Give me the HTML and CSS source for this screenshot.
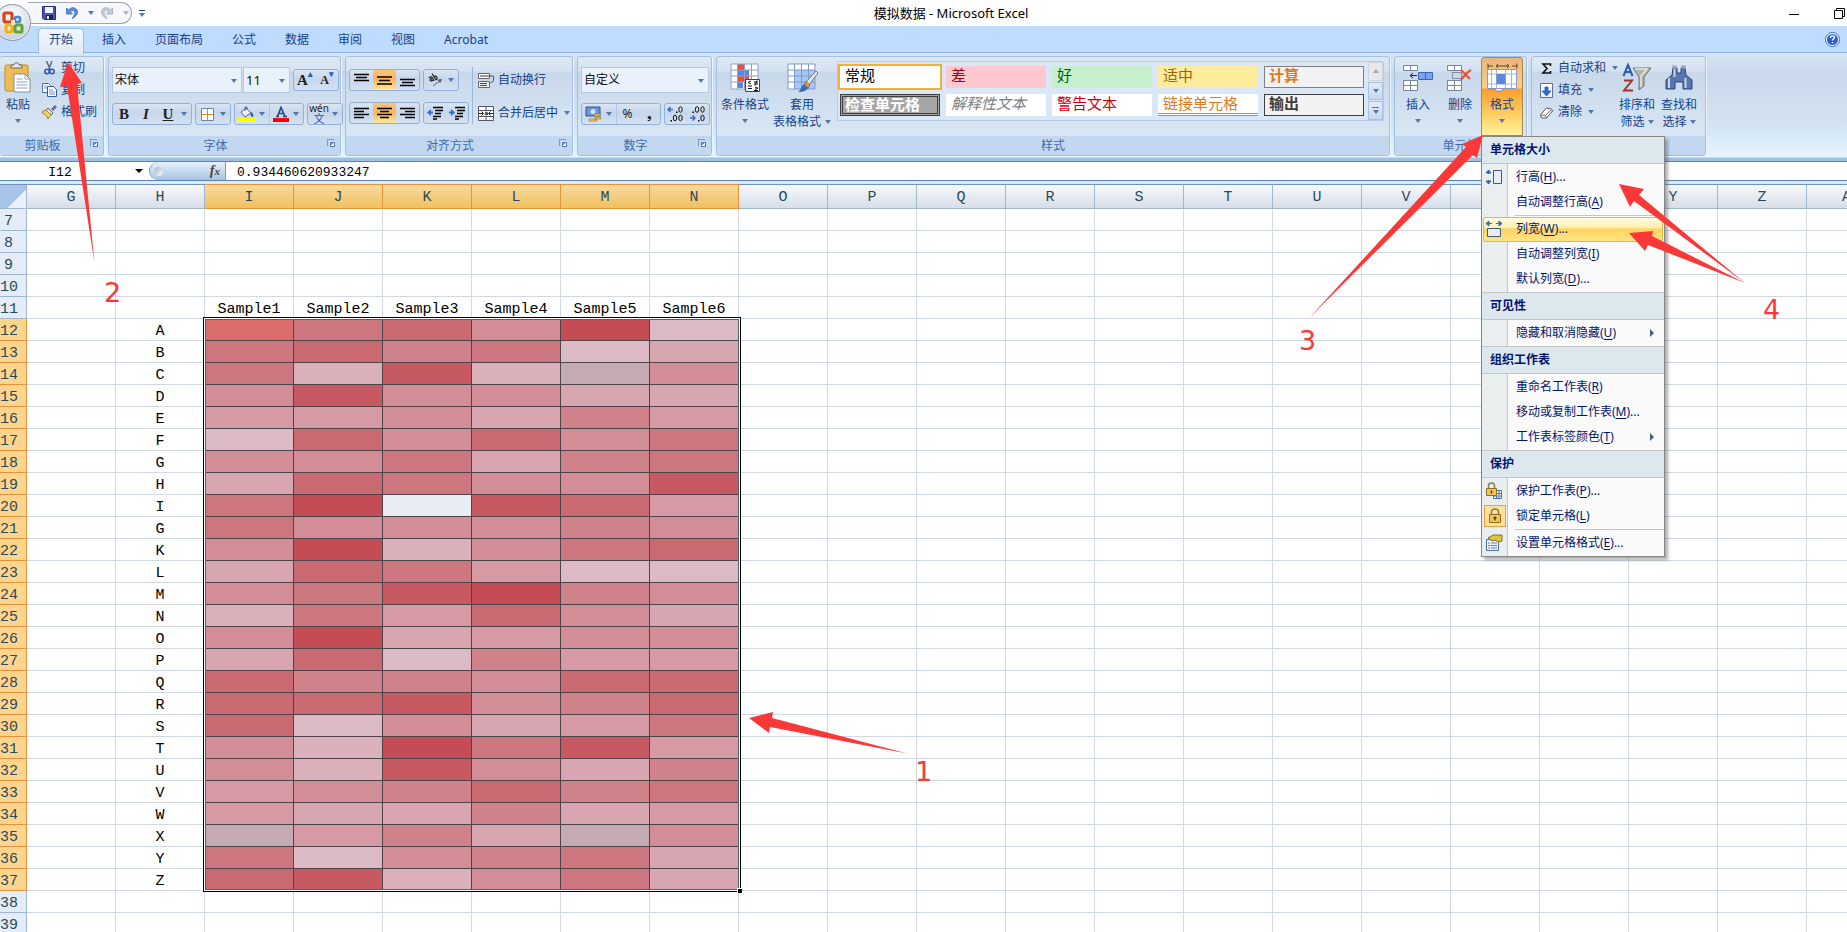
FILE: index.html
```html
<!DOCTYPE html>
<html lang="zh-CN">
<head>
<meta charset="utf-8">
<title>模拟数据 - Microsoft Excel</title>
<link rel="stylesheet" href="styles.css">
</head>
<body>
<header class="top">
  <div class="titlebar">
    <div class="qat-zone">
      <div class="qat">
        <button class="bare" aria-label="保存"><svg width="14" height="14" viewBox="0 0 14 14"><path d="M.5.5h13v13H2l-1.500-1.500z" fill="#4a50b4" stroke="#2b2f7e"/><path d="M3 1h8v6H3z" fill="#eef4ff"/><path d="M4 9h7v4.500H4z" fill="#1d2050"/><path d="M5 10h2v3H5z" fill="#dfe6ff"/></svg></button>
        <button class="bare" aria-label="撤消"><svg width="14" height="14" viewBox="0 0 14 14"><path d="M1.500 2v6h6L5.500 6C8 3 11 5 9.500 8.500 9 10 8 11 7 12.500 11.500 10.500 13.500 7 12 4 10.300 1 6 .8 3.500 4z" fill="#5b8fdc" stroke="#2c5cae" stroke-width=".7"/></svg></button>
        <i class="caret"></i>
        <button class="bare" aria-label="恢复"><svg width="14" height="14" viewBox="0 0 14 14"><path d="M12.500 2v6h-6L8.500 6C6 3 3 5 4.500 8.500 5 10 6 11 7 12.500 2.500 10.500.5 7 2 4 3.700 1 8 .8 10.500 4z" fill="#c3ccd8" stroke="#98a5b8" stroke-width=".7"/></svg></button>
        <i class="caret dim"></i>
      </div>
      <button class="bare more" aria-label="自定义快速访问工具栏"><i class="caret"></i></button>
    </div>
    <div class="title">模拟数据 - Microsoft Excel</div>
    <div class="winbtns">
      <button class="bare" aria-label="最小化"><svg width="10" height="11" viewBox="0 0 10 11"><path d="M0 6.500h10" stroke="#000"/></svg></button>
      <button class="bare" aria-label="还原"><svg width="11" height="11" viewBox="0 0 11 11"><path d="M.5 2.500h8v8h-8zM2.500 2.500v-2h8v8h-2" fill="none" stroke="#000"/></svg></button>
    </div>
  </div>
  <nav class="tabs">
    <button class="tab active">开始</button><button class="tab">插入</button><button class="tab">页面布局</button><button class="tab">公式</button><button class="tab">数据</button><button class="tab">审阅</button><button class="tab">视图</button><button class="tab">Acrobat</button>
    <button class="bare help" aria-label="帮助"><svg width="15" height="15" viewBox="0 0 15 15"><circle cx="7.500" cy="7.500" r="7" fill="#fff" stroke="#3a68c8"/><circle cx="7.500" cy="7.500" r="5.500" fill="#2b5fd0"/><path d="M5.500 6c0-3 4-2.500 4-.5 0 1.500-2 1.300-2 3M7.500 10v1.300" fill="none" stroke="#fff" stroke-width="1.400"/></svg></button>
  </nav>
  <button class="orb" aria-label="Office 按钮"><svg width="22" height="24" viewBox="0 0 22 24"><g fill="none" stroke-width="3.200"><rect x="2" y="2" width="8" height="9" rx="1.500" stroke="#d8451c"/><rect x="13" y="6" width="5" height="5" rx="1.500" stroke="#3c8bd6" stroke-width="2.600"/><rect x="4" y="14" width="6" height="7" rx="1.500" stroke="#f2b11c"/><rect x="13" y="14" width="7" height="7" rx="1.500" stroke="#5fa53a"/></g><path d="M9 9h4v5H9z" fill="#f5e3c4"/></svg></button>
</header>

<section class="ribbon">
  <div class="group g-clip">
    <div class="gbody">
      <button class="big"><svg width="28" height="32" viewBox="0 0 28 32"><rect x="1" y="3" width="23" height="26" rx="1.500" fill="#eebb55" stroke="#c08a2c"/><path d="M7 6V3h3c0-3 5-3 5 0h3v3z" fill="#e6e9ee" stroke="#666"/><path d="M10 12h11l5 5v13H10z" fill="#fff" stroke="#7b8fae"/><path d="M21 12v5h5M12.500 17h6M12.500 20h11M12.500 23h11M12.500 26h11" fill="none" stroke="#8aa0c4"/></svg><span>粘贴</span><i class="caret"></i></button>
      <div class="stack">
        <button class="small"><svg width="14" height="14" viewBox="0 0 14 14"><path d="M4 0l4 9M9.500 0L6 9" stroke="#566a8c" stroke-width="1.500"/><circle cx="4.500" cy="10.500" r="2.200" fill="none" stroke="#2c5cae" stroke-width="1.600"/><circle cx="9.500" cy="10.500" r="2.200" fill="none" stroke="#2c5cae" stroke-width="1.600"/></svg>剪切</button>
        <button class="small"><svg width="15" height="14" viewBox="0 0 15 14"><path d="M.5.500h6l2 2v7h-8z" fill="#fff" stroke="#4a70b0"/><path d="M5.500 3.500h6l3 3v7h-9z" fill="#fff" stroke="#2c5cae"/><path d="M2 3h3M2 5h3M7 7h4M7 9h6M7 11h6" stroke="#6d92cc"/></svg>复制</button>
        <button class="small"><svg width="15" height="14" viewBox="0 0 15 14"><path d="M9 4l4-4 2 2-4 4z" fill="#7c5fa8"/><path d="M6 3l5 5-2 2-6-4z" fill="#d8dce4" stroke="#667"/><path d="M1 6l3-1 5 5-3 4C5 11 3 9 0 8z" fill="#f4d35c" stroke="#8c7326" stroke-width=".8"/></svg>格式刷</button>
      </div>
    </div>
    <div class="glabel"><span>剪贴板</span><i class="launch"></i></div>
  </div>

  <div class="group g-font">
    <div class="gbody rows">
      <div class="line">
        <span class="joined"><label class="sel w-name"><select aria-label="字体"><option>宋体</option></select></label><label class="sel w-size"><select aria-label="字号"><option>11</option></select></label></span>
        <div class="box"><button class="serif grow">A<sup>▴</sup></button><button class="serif shrink">A<sup>▾</sup></button></div>
      </div>
      <div class="line">
        <div class="box"><button class="serif b">B</button><button class="serif i">I</button><button class="serif u">U</button><i class="caret"></i></div>
        <div class="box"><button aria-label="边框"><svg width="13" height="13" viewBox="0 0 13 13"><path d="M.5.5h12v12H.5z" fill="#fff" stroke="#6d83ab"/><path d="M6.500 1v11M1 6.500h11" stroke="#d48c2a"/></svg></button><i class="caret"></i></div>
        <div class="box"><button aria-label="填充颜色"><svg width="17" height="16" viewBox="0 0 17 16"><path d="M3 6l5-4 5 5-6 4z" fill="#eef2f8" stroke="#55688a"/><path d="M7 5V1h2v3" fill="none" stroke="#55688a"/><path d="M13 6c2 1 3 3 2 5-2 0-3-2-2-5" fill="#2c5cae"/><path d="M0 12h17v4H0z" fill="#ff0"/></svg></button><i class="caret"></i><button aria-label="字体颜色"><svg width="16" height="16" viewBox="0 0 16 16"><path d="M3 10.500h3M10 10.500h4M4.500 10.500L8 1.500l4 9M6 7.500h5" fill="none" stroke="#2b4a86" stroke-width="1.700"/><path d="M0 12h16v4H0z" fill="#f00"/></svg></button><i class="caret"></i></div>
        <div class="box"><button class="wen"><span>wén</span><span>文</span></button><i class="caret"></i></div>
      </div>
    </div>
    <div class="glabel"><span>字体</span><i class="launch"></i></div>
  </div>

  <div class="group g-align">
    <div class="gbody">
      <div class="rows">
        <div class="line">
          <div class="box wide"><button aria-label="顶端对齐"><svg width="15" height="14"><path d="M0 1.500h15M2 4.500h11M0 7.500h15" stroke="#000" stroke-width="1.500"/></svg></button><button class="on" aria-label="垂直居中"><svg width="15" height="14"><path d="M0 4h15M2 7.500h11M0 11h15" stroke="#000" stroke-width="1.500"/></svg></button><button aria-label="底端对齐"><svg width="15" height="14"><path d="M0 6.500h15M2 9.500h11M0 12.500h15" stroke="#000" stroke-width="1.500"/></svg></button></div>
          <div class="box"><button aria-label="方向"><svg width="16" height="14" viewBox="0 0 16 14"><path d="M2 5c1-2 3-1 3.500 0L7 8M5 5.500C2 6 3 9 6 7.500M5 .5L9 7M7 4c1-2 5 0 2 3" fill="none" stroke="#222" stroke-width="1.300"/><path d="M6 13l8-6M14.500 6.500l-3.500.5 2 2.500z" fill="#567" stroke="#567"/></svg></button><i class="caret"></i></div>
        </div>
        <div class="line">
          <div class="box wide"><button aria-label="左对齐"><svg width="15" height="13"><path d="M0 1.500h15M0 4.500h10M0 7.500h15M0 10.500h10" stroke="#000" stroke-width="1.500"/></svg></button><button class="on" aria-label="居中"><svg width="15" height="13"><path d="M0 1.500h15M3 4.500h9M0 7.500h15M3 10.500h9" stroke="#000" stroke-width="1.500"/></svg></button><button aria-label="右对齐"><svg width="15" height="13"><path d="M0 1.500h15M5 4.500h10M0 7.500h15M5 10.500h10" stroke="#000" stroke-width="1.500"/></svg></button></div>
          <div class="box"><button aria-label="减少缩进"><svg width="16" height="14"><path d="M6 1.500h10M8 4.500h8M8 7.500h6M6 10.500h8M6 13h4" stroke="#000" stroke-width="1.500"/><path d="M0 6.500L4 3v2.500h2v2H4V10z" fill="#3a6ad0"/></svg></button><button aria-label="增加缩进"><svg width="16" height="14"><path d="M6 1.500h10M8 4.500h8M8 7.500h6M6 10.500h8M6 13h4" stroke="#000" stroke-width="1.500"/><path d="M6 6.500L2 3v2.500H0v2h2V10z" fill="#3a6ad0"/></svg></button></div>
        </div>
      </div>
      <div class="rule"></div>
      <div class="rows">
        <button class="small"><svg width="17" height="15" viewBox="0 0 17 15"><path d="M.5.5h11v5H.5zM.5 8.500h11v6H.5z" fill="#f6f6ee" stroke="#667"/><path d="M2 3h13M2 10.500h7M2 12.500h7" stroke="#444"/><path d="M15.500 3v5l-3 2" fill="none" stroke="#2c5cae"/></svg>自动换行</button>
        <button class="small"><svg width="17" height="15" viewBox="0 0 17 15"><path d="M.5.5h15v14H.5zM.5 4.500h15M.5 10.500h15M8 1v3.500M8 10.500v4" fill="#fff" stroke="#556"/><path d="M1 7.500h4M11 7.500h4M3.500 5.500l2 2-2 2M12.500 5.500l-2 2 2 2" fill="none" stroke="#222"/><path d="M7 6.500c2-1 3 0 2.500 2.500M9 7.500C6 7.500 7 9.500 9 8.500" fill="none" stroke="#222"/></svg>合并后居中<i class="caret"></i></button>
      </div>
    </div>
    <div class="glabel"><span>对齐方式</span><i class="launch"></i></div>
  </div>

  <div class="group g-num">
    <div class="gbody rows">
      <div class="line"><label class="sel w-fmt"><select aria-label="数字格式"><option>自定义</option></select></label></div>
      <div class="line">
        <div class="box"><button aria-label="会计数字格式"><svg width="17" height="16" viewBox="0 0 17 16"><path d="M1 1h14v9H1z" fill="#6f94d8" stroke="#2f55a0"/><circle cx="8" cy="5.500" r="2.500" fill="#d5e1f6"/><path d="M9 8h6v2H9zM10 11h6v2h-6zM4 13h8v2H4z" fill="#f5c84c" stroke="#9b7420" stroke-width=".6"/></svg></button><i class="caret"></i><button class="sign">%</button><button class="sign">❟</button></div>
        <div class="box"><button aria-label="增加小数位数"><svg width="18" height="16" viewBox="0 0 18 16"><path d="M6 3.500H1M3.500 1L1 3.500 3.500 6" fill="none" stroke="#3a6ad0" stroke-width="1.500"/><g fill="none" stroke="#111"><ellipse cx="13.500" cy="3.500" rx="1.700" ry="2.800"/><ellipse cx="8" cy="12" rx="1.700" ry="2.800"/><ellipse cx="13.500" cy="12" rx="1.700" ry="2.800"/></g><path d="M9 5.500h1.500V7H9zM3.500 14H5v1.500H3.500z"/></svg></button><button aria-label="减少小数位数"><svg width="18" height="16" viewBox="0 0 18 16"><path d="M1 12h5M3.500 9.500L6 12l-2.500 2.500" fill="none" stroke="#3a6ad0" stroke-width="1.500"/><g fill="none" stroke="#111"><ellipse cx="8" cy="3.500" rx="1.700" ry="2.800"/><ellipse cx="13.500" cy="3.500" rx="1.700" ry="2.800"/><ellipse cx="13.500" cy="12" rx="1.700" ry="2.800"/></g><path d="M3.500 5.500H5V7H3.500zM9 14h1.500v1.500H9z"/></svg></button></div>
      </div>
    </div>
    <div class="glabel"><span>数字</span><i class="launch"></i></div>
  </div>

  <div class="group g-style">
    <div class="gbody">
      <button class="big"><svg width="31" height="30" viewBox="0 0 31 30"><path d="M1 1h27v25H1z" fill="#fff"/><path d="M7 1h7v6H7zM7 13h12v6H7z" fill="#e8503c"/><path d="M7 7h12v6H7zM7 19h6v6H7z" fill="#5a86e0"/><path d="M1 1h27v25H1zM7.500 1v25M14.500 1v25M21.500 1v25M1 7h27M1 13h27M1 19h27" fill="none" stroke="#8ea2c8"/><path d="M15.500 16.500h14v12h-14z" fill="#fff" stroke="#444"/><path d="M21 18l-3 1.500 3 1.500M18 23h4M24 19h4M24 21h4M27 17.500l-2 5M25 24l3 1.200-3 1.200M18 25.500h4M24 27.500h4" fill="none" stroke="#111"/></svg><span>条件格式</span><i class="caret"></i></button>
      <button class="big"><svg width="31" height="30" viewBox="0 0 31 30"><path d="M1 1h27v25H1z" fill="#fff"/><path d="M7 7h21v19H7z" fill="#a9c6f4"/><path d="M1 1h27v25H1zM7.500 1v25M14.500 1v25M21.500 1v25M1 7h27M1 13h27M1 19h27" fill="none" stroke="#7f9ad0"/><path d="M29 8l2 2-9 12-3-3z" fill="#e4e4e4" stroke="#777"/><path d="M19 18l4 4-2 3-4-3z" fill="#d89a3c" stroke="#8a5a1c" stroke-width=".7"/><path d="M17 21l4 4c-2 4-7 4-10 4 3-2 3-6 6-8z" fill="#3c6cc0"/></svg><span>套用</span><span class="cap">表格格式<i class="caret"></i></span></button>
      <div class="gallery">
        <div class="swatches">
          <button class="sw s-normal">常规</button><button class="sw s-bad">差</button><button class="sw s-good">好</button><button class="sw s-neutral">适中</button><button class="sw s-calc">计算</button>
          <button class="sw s-check">检查单元格</button><button class="sw s-explain">解释性文本</button><button class="sw s-warn">警告文本</button><button class="sw s-link">链接单元格</button><button class="sw s-out">输出</button>
        </div>
        <div class="scroller"><button class="off" aria-label="上一行"><i class="caret up"></i></button><button aria-label="下一行"><i class="caret"></i></button><button class="all" aria-label="其他"><i class="caret"></i></button></div>
      </div>
    </div>
    <div class="glabel"><span>样式</span></div>
  </div>

  <div class="group g-cells">
    <div class="gbody">
      <button class="big"><svg width="31" height="28" viewBox="0 0 31 28"><path d="M.5 1.500h14v5H.5zM.5 16.500h14v10H.5zM7.500 1v5.500M7.500 16.500v10M.5 21.500h14" fill="#fff" stroke="#7585a5"/><path d="M15.500 8.500h14v7h-14zM22.500 8.500v7" fill="#7ba2ee" stroke="#3e62b4"/><path d="M14 11.500H7M10 9l-3 2.500 3 2.500" fill="none" stroke="#222"/></svg><span>插入</span><i class="caret"></i></button>
      <button class="big"><svg width="27" height="28" viewBox="0 0 27 28"><path d="M.5 1.500h14v5H.5zM.5 16.500h14v10H.5zM7.500 1v5.500M7.500 16.500v10M.5 21.500h14" fill="#fff" stroke="#7585a5"/><path d="M5.500 8.500h9v6h-9z" fill="none" stroke="#445" stroke-dasharray="1 1"/><path d="M14 6c3 3 6 6 9 9M24 6c-4 2-7 6-10 10" fill="none" stroke="#e8502c" stroke-width="2"/></svg><span>删除</span><i class="caret"></i></button>
      <div class="fmt">
        <button class="big pressed"><svg width="31" height="30" viewBox="0 0 31 30"><path d="M1 3h5M25 3h5M9 3h13M11 1L9 3l2 2M20 1l2 2-2 2M1 .500v5M30 .500v5" fill="none" stroke="#5a4326"/><path d="M.5 6.500h29v19h-29z" fill="#fff" stroke="#8a9ac0"/><path d="M1 11h28M1 21h28M9.500 7v18M18.500 7v18M24.500 7v18M4.500 7v18" stroke="#a6b4d4"/><path d="M9.500 11h9v10h-9z" fill="#5b86dc"/><path d="M2 26h6l1 2h6l1-2" fill="#fff" stroke="#7a8ab0"/></svg><span>格式</span><i class="caret"></i></button>
        <div class="menu" role="menu">
          <h2>单元格大小</h2>
          <div class="pane">
            <button role="menuitem"><svg width="18" height="18" viewBox="0 0 18 18"><path d="M3.500 2v4M3.500 12v4M1 5l2.500-3L6 5zM1 13l2.500 3L6 13z" fill="#3a64b4" stroke="#3a64b4"/><path d="M8.500 2.500h8v13h-8z" fill="#e6eefb" stroke="#44587c"/></svg><span>行高(<u>H</u>)...</span></button>
            <button role="menuitem"><span>自动调整行高(<u>A</u>)</span></button>
            <hr>
            <button role="menuitem" class="hot"><svg width="18" height="18" viewBox="0 0 18 18"><path d="M2 3.500h5M11 3.500h5M4 1L1 3.500 4 6zM14 1l3 2.500L14 6z" fill="#3a64b4" stroke="#3a64b4"/><path d="M2.500 8.500h13v8h-13z" fill="#e6eefb" stroke="#44587c"/></svg><span>列宽(<u>W</u>)...</span></button>
            <button role="menuitem"><span>自动调整列宽(<u>I</u>)</span></button>
            <button role="menuitem"><span>默认列宽(<u>D</u>)...</span></button>
          </div>
          <h2>可见性</h2>
          <div class="pane"><button role="menuitem" class="sub"><span>隐藏和取消隐藏(<u>U</u>)</span></button></div>
          <h2>组织工作表</h2>
          <div class="pane">
            <button role="menuitem"><span>重命名工作表(<u>R</u>)</span></button>
            <button role="menuitem"><span>移动或复制工作表(<u>M</u>)...</span></button>
            <button role="menuitem" class="sub"><span>工作表标签颜色(<u>T</u>)</span></button>
          </div>
          <h2>保护</h2>
          <div class="pane">
            <button role="menuitem"><svg width="18" height="18" viewBox="0 0 18 18"><path d="M8.500 8.500h8v8h-8zM8.500 11.500h8M8.500 14h8M11.500 8.500v8M14 8.500v8" fill="#fff" stroke="#4a70b0"/><path d="M3.500 7V4c0-4 6-4 6 0v3" fill="none" stroke="#8c7a4c" stroke-width="1.500"/><path d="M1.500 6.500h10v7h-10z" fill="#f0c558" stroke="#92701f"/><path d="M6.500 8.500v3" stroke="#4c3a10" stroke-width="1.500"/></svg><span>保护工作表(<u>P</u>)...</span></button>
            <button role="menuitem"><svg class="boxed" width="20" height="20" viewBox="-1 -1 20 20"><path d="M5.500 8V5c0-4 7-4 7 0v3" fill="none" stroke="#8c7a4c" stroke-width="1.500"/><path d="M3.500 7.500h11v8h-11z" fill="#f0c558" stroke="#92701f"/><path d="M9 9.500v4M7.500 11h3" stroke="#4c3a10" stroke-width="1.300"/></svg><span>锁定单元格(<u>L</u>)</span></button>
            <hr>
            <button role="menuitem"><svg width="18" height="18" viewBox="0 0 18 18"><path d="M1.500 5.500h12v11h-12z" fill="#eef4ff" stroke="#4a70b0"/><path d="M3 9h2M6 9h6M3 11.500h2M6 11.500h6M3 14h2M6 14h6" stroke="#5c7fbe"/><path d="M3 4l5-3h9v6l-4 1-3-2-3 1z" fill="#e6bf3c" stroke="#6b7a32"/></svg><span>设置单元格格式(<u>E</u>)...</span></button>
          </div>
        </div>
      </div>
    </div>
    <div class="glabel"><span>单元格</span></div>
  </div>

  <div class="group g-edit">
    <div class="gbody">
      <div class="stack">
        <button class="small"><svg width="13" height="13" viewBox="0 0 13 13"><path d="M10.500 4V2H3l4 4.500L3 11h7.500V9" fill="none" stroke="#111" stroke-width="1.600"/></svg>自动求和<i class="caret"></i></button>
        <button class="small"><svg width="13" height="15" viewBox="0 0 13 15"><path d="M.5.500h12v14H.5z" fill="#eef4ff" stroke="#5c7094"/><path d="M1 1h11v3H1z" fill="#fff"/><path d="M5 4h3v4h3l-4.500 5L2 8h3z" fill="#2c6be0" stroke="#1c459c" stroke-width=".6"/></svg>填充<i class="caret"></i></button>
        <button class="small"><svg width="14" height="13" viewBox="0 0 14 13"><path d="M1 9l6-7 5 1 1 2-6 7H2z" fill="#fff" stroke="#556"/><path d="M1 9l5 .5 6-6M6 9.500L7 12" fill="none" stroke="#778"/></svg>清除<i class="caret"></i></button>
      </div>
      <button class="big"><svg width="30" height="30" viewBox="0 0 30 30"><path d="M1.500 13L6 2l4.500 11M3.500 9h5" fill="none" stroke="#2c5cae" stroke-width="2"/><path d="M2 17.500h8L2 27.500h9" fill="none" stroke="#a03428" stroke-width="2"/><path d="M11 5h18l-7 9v9l-5 4V14z" fill="#b4b4ac" stroke="#77776f"/><path d="M13 6h12l-6 7v11" fill="none" stroke="#e8e8e2" stroke-width="1.500"/></svg><span>排序和</span><span class="cap">筛选<i class="caret"></i></span></button>
      <button class="big"><svg width="28" height="28" viewBox="0 0 28 28"><path d="M8 4h4v5h4V4h4l1 7 6 5v9h-9v-7h-8v7H1v-9l6-5z" fill="#5877b0" stroke="#2e4674"/><path d="M7 3h5M16 3h5" stroke="#98aacb" stroke-width="3"/><path d="M4 14v10M20.500 14v10M9.500 5v8" stroke="#c6d3ea" stroke-width="2"/></svg><span>查找和</span><span class="cap">选择<i class="caret"></i></span></button>
    </div>
    <div class="glabel"><span>编辑</span></div>
  </div>
</section>

<div class="formula">
  <input class="namebox" aria-label="名称框" value="I12"><i class="caret black"></i>
  <div class="fxzone"><i class="knob"></i><button class="bare fx">f<sub>x</sub></button></div>
  <input class="fin" aria-label="编辑栏" value="0.934460620933247">
</div>

<main class="sheet">
  <table class="grid" id="grid"></table>
  <div class="selection"><i></i></div>
</main>

<svg class="marks" width="1847" height="932" viewBox="0 0 1847 932">
  <path d="M68 62L60 87l7-1L94.500 263 77 84l5-1z"/>
  <path d="M1483 135l-21 9 4 3L1310 317l163-162 4 3z"/>
  <path d="M1619 184l25 5-5 6 106 88-111-82-4 6z"/>
  <path d="M1629 233l24-2-1 5 93 47-97-38-3 6z"/>
  <path d="M749 718l24-6-1 6 135 35.500L770 727l-1 6z"/>
  <text x="104" y="302">2</text><text x="1299" y="350">3</text><text x="1763" y="319">4</text><text x="915" y="781">1</text>
</svg>
<script src="grid.js"></script>
</body>
</html>
```

FILE: grid.js
```js
const shades = {
  0: "#dcbac5", 1: "#dab0bb", 2: "#d8a6b1", 3: "#d59aa4", 4: "#d28d96", 5: "#cf828a",
  6: "#cc767f", 7: "#c96a72", 8: "#c65961", 9: "#c34c55",
  R: "#da6d6b", G: "#c3aab3", W: "#e8ecf5"
};
const labels = "ABCDEFGHIGKLMNOPQRSTUVWXYZ";
const heat = [
  "R67490", "675602", "6181G4", "484422", "334253", "074746", "446256", "276448",
  "69W873", "644454", "491467", "276300", "468954", "163742", "492344", "270533", "755477",
  "778457", "704236", "419683", "418425", "345756", "322523", "G352G4", "604562", "781462"
];
const columns = ["G", "H", "I", "J", "K", "L", "M", "N", "O", "P", "Q", "R", "S", "T", "U", "V", "W", "X", "Y", "Z", "AA"];
const first = 7, last = 39, heatRow = 12;

let html = "<colgroup><col class='rowcol'>" + "<col class='datacol'>".repeat(columns.length) + "</colgroup><thead><tr><th class='corner'></th>";
columns.forEach((c, i) => { html += `<th class="${i >= 2 && i < 8 ? "picked" : ""}">${c}</th>`; });
html += "</tr></thead><tbody>";
for (let r = first; r <= last; r++) {
  const k = r - heatRow, inside = k >= 0 && k < heat.length;
  html += `<tr><th class="${inside ? "picked" : ""}">${r}</th>`;
  columns.forEach((c, i) => {
    const h = i - 2;
    if (inside && h >= 0 && h < 6) html += `<td class="heat" style="background:${shades[heat[k][h]]}"></td>`;
    else if (inside && i === 1) html += `<td>${labels[k]}</td>`;
    else if (r === 11 && h >= 0 && h < 6) html += `<td>Sample${h + 1}</td>`;
    else html += "<td></td>";
  });
  html += "</tr>";
}
document.getElementById("grid").innerHTML = html + "</tbody>";
```

FILE: styles.css
```css
* { box-sizing: border-box; }
body {
  margin: 0; height: 100vh; overflow: hidden; position: relative;
  display: flex; flex-direction: column; background: #fff;
  font: 12px/16px "Noto Sans", "Noto Sans CJK SC", sans-serif; color: #15428b;
}
button, input, select { font: inherit; color: inherit; margin: 0; padding: 0; }
button { background: none; border: 0; white-space: nowrap; }
svg { display: block; flex: none; }
.bare { display: flex; align-items: center; }

.caret { flex: none; width: 0; height: 0; border: 3px solid transparent; border-top: 4px solid #5576a8; border-bottom: 0; }
.caret.dim { border-top-color: #a9b4c4; }
.caret.up { border-top: 0; border-bottom: 4px solid #a5a9b0; }
.caret.black { border-width: 4px; border-top: 4px solid #000; border-bottom: 0; }

/* title bar and tabs */
.top { position: relative; flex: none; }
.titlebar { display: flex; height: 26px; align-items: center; background: #fff; }
.qat-zone { width: 150px; padding-left: 28px; display: flex; align-items: center; gap: 7px; }
.qat { display: flex; align-items: center; gap: 6px; width: 104px; height: 22px; padding-left: 14px; border: 1px solid #9ea3ad; border-left: 0; border-radius: 0 11px 11px 0; background: #f5f7fa; }
.qat button { margin-right: 3px; }
.more { border-top: 1px solid #15428b; padding-top: 2px; }
.title { flex: 1; text-align: center; color: #000; font-size: 13px; }
.winbtns { width: 95px; padding-left: 37px; display: flex; gap: 35px; align-items: center; }
.tabs { display: flex; height: 27px; padding: 2px 7px 0 38px; gap: 7px; background: #bfdbff; border-bottom: 1px solid #8db2e3; }
.tab { padding: 0 11px; height: 24px; }
.tab.active { height: 26px; background: linear-gradient(#f2f7fd, #dfeaf7); border: 1px solid #9cbfe9; border-bottom: 0; border-radius: 4px 4px 0 0; padding: 0 10px 3px; }
.help { margin-left: auto; height: 22px; }
.orb { position: absolute; left: -6px; top: 4px; width: 37px; height: 37px; padding-left: 7px; border-radius: 50%; border: 1px solid #8b94a6; background: radial-gradient(circle at 50% 30%, #fff, #d9dee8 60%, #b4bdcc); box-shadow: 0 0 0 1px #e9eef6 inset; }

/* ribbon */
.ribbon { flex: none; display: flex; gap: 4px; height: 109px; padding: 3px 0 5px; background: linear-gradient(#d9e5f3, #c9d9ec 20px, #d3e3f3 70px, #e3f5fe 104px, #9fc0e2 105px, #9fc0e2 108px, #5b83b8 108px); }
.group { height: 100px; display: flex; flex-direction: column; border: 1px solid #a3c0e0; border-radius: 3px; background: linear-gradient(#dde8f4, #d5e2f1 14px, #c8d8eb 15px, #d9e7f4 79px); box-shadow: 1px 1px 0 #edf5fc; }
.gbody { height: 79px; display: flex; }
.glabel { height: 19px; background: #c1d8f0; color: #3e6aaa; display: flex; justify-content: center; align-items: center; position: relative; border-radius: 0 0 3px 3px; }
.g-clip .glabel, .g-font .glabel, .g-align .glabel, .g-num .glabel { padding-right: 18px; }
.launch { position: absolute; right: 6px; top: 3px; width: 7px; height: 7px; border: 1px solid #7d9cc4; border-right: 0; border-bottom: 0; }
.launch::after { content: ""; position: absolute; left: 2px; top: 2px; width: 4px; height: 4px; border: 1px solid #5576a8; border-left: 0; border-top: 0; background: linear-gradient(135deg, #6a88b4 60%, #fff 60%); }
.g-clip { width: 104px; border-left: 0; }
.g-font { width: 233px; }
.g-align { width: 228px; }
.g-num { width: 135px; }
.g-style { width: 674px; }
.g-cells { width: 133px; }
.g-edit { width: 175px; }

.big { display: flex; flex-direction: column; align-items: center; padding-top: 5px; color: #15428b; line-height: 17px; }
.big svg { height: 32px; margin-bottom: 2px; }
.big > .caret { margin-top: 6px; }
.cap { display: flex; align-items: center; gap: 4px; }
.stack { display: flex; flex-direction: column; align-items: flex-start; }
.small { display: flex; align-items: center; gap: 3px; height: 22px; }
.small svg { width: 17px; }
.small .caret { margin-left: 3px; }

.g-clip .big { width: 36px; }
.g-clip .stack { padding-left: 5px; }

.rows { display: flex; flex-direction: column; gap: 10px; padding-top: 10px; }
.line { display: flex; gap: 3px; height: 26px; align-items: center; }
.line:last-child { height: 22px; }
.joined { display: flex; gap: 1px; }
.g-font .rows, .g-font .gbody, .g-num .gbody { padding-left: 3px; }
.sel { position: relative; height: 26px; background: #e9f1fb; border: 1px solid #b3cbe8; }
.sel select { appearance: none; width: 100%; height: 24px; border: 0; background: none; padding-left: 2px; color: #111; }
.sel::after { content: ""; position: absolute; right: 4px; top: 11px; border: 3px solid transparent; border-top: 4px solid #5576a8; border-bottom: 0; pointer-events: none; }
.w-name { width: 130px; }
.w-size { width: 47px; font-size: 13px; }
.w-fmt { width: 128px; }
.box { display: flex; align-items: center; height: 22px; border: 1px solid #92b0d8; border-radius: 3px; background: linear-gradient(#d9e5f3, #c6d7ec 45%, #d3e1f1); }
.box button { width: 22px; height: 20px; display: flex; align-items: center; justify-content: center; }
.box .caret { margin: 0 4px 0 2px; }
.box .caret + button { border-left: 1px solid #b3c8e2; }
.wide button { width: 23px; }
.box .on { background: linear-gradient(#fbc37c, #fdb457 45%, #ffe89b); }
.serif { font: bold 15px/20px "Liberation Serif", serif; color: #222; }
.i { font-style: italic; }
.u { text-decoration: underline; }
.serif sup { font-size: 9px; line-height: 8px; color: #2c5cae; align-self: flex-start; }
.shrink { font-size: 12px; }
.sign { color: #222; }
.box .wen { flex-direction: column; font-size: 10px; line-height: 9px; color: #222; }
.wen span + span { color: #2c4fc0; font-size: 11px; line-height: 11px; }
.g-align .rows { padding: 11px 0 0 3px; gap: 9px; }
.g-align .line { gap: 3px; height: 24px; }
.g-align .rows .small { height: 24px; }
.rule { width: 1px; margin: 10px 2px 12px 3px; background: #9bb8dc; }

.g-style .big { width: 56px; }
.g-style .big + .big { width: 58px; }
.gallery { display: flex; height: 60px; margin: 4px 0 0 6px; border: 1px solid #b3cbe8; background: #d9e7f6; border-radius: 2px; }
.swatches { display: grid; grid-template-columns: repeat(5, 100px); grid-auto-rows: 22px; gap: 6px; padding: 4px 4px 0 2px; }
.sw { text-align: left; padding-left: 5px; font: 15px/18px "Noto Sans CJK SC", sans-serif; background: #fff; overflow: hidden; display: flex; }
.s-normal { color: #000; outline: 2px solid #eeb23c; }
.s-bad { background: #ffc7ce; color: #9c0006; }
.s-good { background: #c6efce; color: #006100; }
.s-neutral { background: #ffeb9c; color: #9c6500; }
.s-calc { background: #f2f2f2; color: #e07a1c; font-weight: bold; border: 1px solid #7f7f7f; line-height: 16px; padding-left: 4px; }
.s-check { background: #a5a5a5; color: #fff; font-weight: bold; border: 3px double #3f3f3f; line-height: 13px; padding-left: 2px; }
.s-explain { color: #7f7f7f; font-style: italic; }
.s-warn { color: #d00000; }
.s-link { color: #e07a1c; border-bottom: 3px double #e8842c; }
.s-out { background: #f2f2f2; color: #3f3f3f; font-weight: bold; border: 1px solid #3f3f3f; line-height: 16px; padding-left: 4px; }
.scroller { width: 15px; display: grid; grid-template-rows: repeat(3, 1fr); gap: 1px; }
.scroller button { border: 1px solid #a9c2e2; background: linear-gradient(#e0ebf8, #c6d9f0); display: flex; flex-direction: column; align-items: center; justify-content: center; }
.scroller .off { background: #e6e8eb; border-color: #cfd5dc; }
.all::before { content: ""; width: 7px; height: 1px; background: #5576a8; margin-bottom: 2px; }

.g-cells .big { width: 42px; }
.g-cells .gbody { padding-left: 2px; }
.fmt { position: relative; }
.fmt .pressed { height: 79px; border: 1px solid #a8894d; border-radius: 3px 3px 0 0; padding-top: 4px; background: linear-gradient(#e9b77c, #fccb8b 30px, #fd9d2d 31px, #fed56a 60px, #fff1a0); }

.g-edit .stack { padding-left: 6px; width: 84px; }
.g-edit .big { width: 42px; }
.g-edit .cap { gap: 3px; }

/* format menu */
.menu { position: absolute; z-index: 5; left: 0; top: 100%; width: 184px; border: 1px solid #868686; background: #fafafa; box-shadow: 3px 3px 3px rgba(60, 60, 60, .4); color: #00156e; }
.menu h2 { margin: 0; height: 28px; padding-left: 8px; font: bold 12px/26px "Noto Sans", "Noto Sans CJK SC", sans-serif; background: #dde7ee; border: 1px solid #c5c5c5; border-width: 1px 0; }
.menu h2:first-child { border-top: 0; height: 27px; }
.pane { padding-top: 1px; background: linear-gradient(90deg, #e9eeee 25px, #c5c5c5 25px, #c5c5c5 26px, #fafafa 26px); }
.pane button { position: relative; display: grid; grid-template-columns: 31px auto; align-items: center; width: 100%; height: 25px; padding: 0 0 2px 3px; text-align: left; }
.pane button span { grid-column: 2; }
.pane button svg { grid-row: 1; }
.pane u { text-underline-offset: 2px; }
.pane hr { margin: 0 0 0 33px; height: 2px; border: 0; border-top: 1px solid #c5c5c5; }
.pane .hot { border: 1px solid #e0b84c; border-radius: 2px; margin: 0 1px; width: 180px; padding-left: 1px; background: linear-gradient(#fffbe0, #ffeeb0 45%, #ffd45a 46%, #ffe487); }
.sub::after { content: ""; position: absolute; right: 10px; top: 8px; border: 4px solid transparent; border-left-color: #4a5a8a; border-right: 0; }
.boxed { background: #fde09a; outline: 1px solid #eba045; }

/* formula bar */
.formula { flex: none; display: flex; align-items: center; height: 19px; background: #fff; border-bottom: 1px solid #5b83b8; }
.formula input { border: 0; background: none; color: #000; height: 18px; padding-top: 3px; font: 13px/15px "Liberation Mono", monospace; outline: 0; }
.namebox { width: 120px; text-align: center; }
.formula > .caret { margin: 0 6px 0 15px; }
.fxzone { display: flex; align-items: center; justify-content: space-between; width: 77px; height: 18px; padding: 0 5px 0 4px; border: 1px solid #7d9cc4; border-width: 0 1px 0 1px; border-radius: 9px 0 0 9px; background: linear-gradient(#e6f0fb, #a9c4e6); }
.knob { width: 9px; height: 9px; border-radius: 50%; background: linear-gradient(135deg, #9fb2cc, #fff); }
.fx { font: italic bold 14px/16px "Liberation Serif", serif; color: #444; }
.fx sub { font-size: 11px; }
.formula .fin { flex: 1; padding-left: 11px; }

/* worksheet */
.sheet { position: relative; flex: 1; min-height: 0; overflow: hidden; border-top: 3px solid #dcebfb; }
.grid { table-layout: fixed; width: 1896px; border-collapse: separate; border-spacing: 0; font: 15px/16px "Liberation Mono", monospace; color: #000; }
.rowcol { width: 27px; }
.datacol { width: 89px; }
.grid th { font-weight: normal; color: #2a4a5a; border: 1px solid #9eb6ce; border-width: 0 1px 1px 0; }
.grid thead th { height: 25px; padding: 3px 0 0; background: linear-gradient(#f7f9fc, #d7dee9); border-top: 1px solid #6f93c0; }
.grid thead .corner { background: linear-gradient(135deg, #a9c4e9 62%, #e9f1fb 62%); }
.grid tbody th { height: 22px; padding: 5px 0 0; background: #e4ecf7; text-align: left; overflow: hidden; }
.grid tbody tr:nth-child(-n+3) th { padding-left: 4px; }
.grid thead .picked { background: linear-gradient(#f9d99f, #f1c15f); border-color: #e8933c; }
.grid tbody .picked { background: #ffd58d; border-color: #e8933c; }
.grid td { height: 22px; padding: 5px 0 0; text-align: center; border: 1px solid #d0d7e5; border-width: 0 1px 1px 0; }
.grid td.heat { border-color: #4c4448; }
.selection { position: absolute; left: 203px; top: 133px; width: 538px; height: 575px; border: 1px solid #000; box-shadow: inset 0 0 0 1px #fff, inset 0 0 0 2px #4f6468; }
.selection i { position: absolute; right: -2px; bottom: -2px; width: 5px; height: 5px; background: #000; border: 1px solid #fff; border-width: 1px 0 0 1px; }

/* annotations */
.marks { position: absolute; left: 0; top: 0; z-index: 10; pointer-events: none; fill: #fb3838; font: 27px "DejaVu Sans", sans-serif; }
```
